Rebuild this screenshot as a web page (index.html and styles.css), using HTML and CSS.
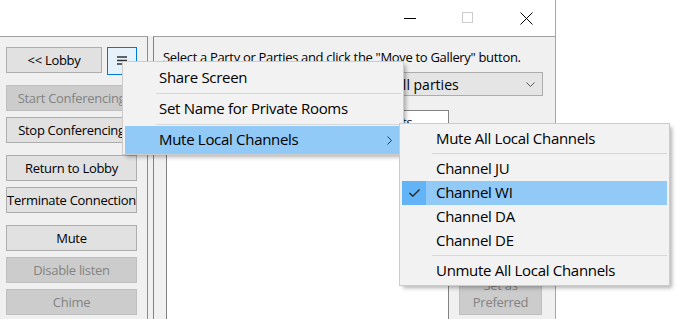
FILE: index.html
```html
<!DOCTYPE html>
<html lang="en">

<head>
    <meta charset="UTF-8" />
    <title>Conference</title>
    <link rel="stylesheet" href="styles.css">
</head>

<body>
    <div class="window">
        <div class="titlebar">
            <div class="caption-btn">
                <svg width="12" height="12" viewBox="0 0 12 12"><path d="M0 6.5H12" stroke="#000" stroke-width="1"/></svg>
            </div>
            <div class="caption-btn">
                <svg width="12" height="12" viewBox="0 0 12 12"><rect x="0.5" y="0.5" width="10" height="10" fill="none" stroke="#cccccc"/></svg>
            </div>
            <div class="caption-btn">
                <svg width="13" height="13" viewBox="0 0 13 13"><path d="M0.5 0.5L12.5 12.5M12.5 0.5L0.5 12.5" stroke="#000" stroke-width="1"/></svg>
            </div>
        </div>

        <div class="client">
            <!-- left side buttons -->
            <div class="side">
                <div class="top-row">
                    <button class="btn lobby">&lt;&lt; Lobby</button>
                    <button class="btn menu-btn">
                        <svg width="12" height="10" viewBox="0 0 12 10"><path d="M0 1H10M0 4.5H10M0 8H7" stroke="#333" stroke-width="1.6"/></svg>
                    </button>
                </div>
                <button class="btn first" disabled>Start Conferencing</button>
                <button class="btn">Stop Conferencing</button>
                <button class="btn group">Return to Lobby</button>
                <button class="btn">Terminate Connection</button>
                <button class="btn group">Mute</button>
                <button class="btn" disabled>Disable listen</button>
                <button class="btn" disabled>Chime</button>
            </div>

            <div class="main">
                <p class="hint">Select a Party or Parties and click the "Move to Gallery" button.</p>
                <div class="combo-row">
                    <span class="combo-label">Show:</span>
                    <div class="combo">
                        <span>All parties</span>
                        <svg width="9" height="5" viewBox="0 0 9 5"><path d="M0.5 0.5L4.5 4.5L8.5 0.5" fill="none" stroke="#555" stroke-width="1"/></svg>
                    </div>
                </div>
                <div class="lower">
                    <div class="list">
                        <div class="list-head">Participants</div>
                    </div>
                    <div class="actions">
                        <button class="btn tall" disabled>Set as<br>Preferred</button>
                    </div>
                </div>
            </div>
        </div>
    </div>

    <!-- context menu -->
    <div class="popup main-menu">
        <div class="item">Share Screen</div>
        <div class="sep"></div>
        <div class="item">Set Name for Private Rooms</div>
        <div class="sep"></div>
        <div class="item active">
            Mute Local Channels
            <svg class="arrow" width="5" height="9" viewBox="0 0 5 9"><path d="M0.5 0.5L4.5 4.5L0.5 8.5" fill="none" stroke="#333" stroke-width="1"/></svg>
        </div>
    </div>

    <div class="popup sub-menu">
        <div class="item">Mute All Local Channels</div>
        <div class="sep"></div>
        <div class="item">Channel JU</div>
        <div class="item active checked">
            <span class="check">
                <svg width="11" height="8" viewBox="0 0 11 8"><path d="M0.5 4L3.8 7.2L10.5 0.5" fill="none" stroke="#1a1a1a" stroke-width="1.2"/></svg>
            </span>
            Channel WI
        </div>
        <div class="item">Channel DA</div>
        <div class="item">Channel DE</div>
        <div class="sep"></div>
        <div class="item">Unmute All Local Channels</div>
    </div>
</body>

</html>
```

FILE: styles.css
```css
* {
    margin: 0;
    padding: 0;
    box-sizing: border-box;
}

body {
    width: 676px;
    height: 319px;
    overflow: hidden;
    position: relative;
    background: #fff;
    font-family: 'Open Sans', 'Noto Sans', sans-serif;
    color: #000;
}

.window {
    width: 556px;
    height: 319px;
    border-right: 1px solid #a6a6a6;
    display: flex;
    flex-direction: column;
}

.titlebar {
    height: 36px;
    display: flex;
    justify-content: flex-end;
    background: #fff;
}

.caption-btn {
    width: 58px;
    display: flex;
    align-items: center;
    justify-content: center;
}

.client {
    flex: 1;
    display: flex;
    background: #f0f0f0;
}

.side {
    width: 148px;
    border-top: 1px solid #a0a0a0;
    border-right: 1px solid #8c8c8c;
    padding: 10px 0 0 6px;
}

.top-row {
    display: flex;
    gap: 5px;
    height: 28px;
}

.btn {
    display: block;
    width: 131px;
    height: 26px;
    margin-top: 6px;
    border: 1px solid #adadad;
    background: #e1e1e1;
    font-family: 'Open Sans', 'Noto Sans', sans-serif;
    font-size: 13px;
    letter-spacing: -0.3px;
    white-space: nowrap;
    color: #000;
}

.btn:disabled {
    background: #cccccc;
    border-color: #bfbfbf;
    color: #838383;
}

.top-row .btn {
    margin-top: 0;
}

.lobby {
    width: 96px;
}

.menu-btn {
    width: 30px;
    height: 28px;
    border-color: #0078d7;
    background: #e5f1fb;
    display: flex;
    align-items: center;
    padding-left: 9px;
}

.btn.first {
    margin-top: 10px;
}

.btn.group {
    margin-top: 12px;
}

.main {
    flex: 1;
    margin-left: 5px;
    border-top: 1px solid #a0a0a0;
    border-left: 1px solid #828282;
    padding: 12px 12px 0 9px;
    display: flex;
    flex-direction: column;
}

.hint {
    font-size: 13px;
    line-height: 16px;
    letter-spacing: -0.32px;
}

.combo-row {
    margin-top: 7px;
    display: flex;
    align-items: center;
    gap: 8px;
}

.combo-label {
    font-size: 13px;
    margin-left: auto;
}

.combo {
    width: 156px;
    height: 24px;
    border: 1px solid #adadad;
    background: #e5e5e5;
    display: flex;
    align-items: center;
    justify-content: space-between;
    padding: 0 7px 0 6px;
    font-size: 14px;
}

.lower {
    flex: 1;
    display: flex;
    margin-top: 14px;
}

.list {
    width: 283px;
    margin-left: 3px;
    background: #fff;
    border: 1px solid #828282;
    border-bottom: none;
}

.list-head {
    height: 22px;
    padding-left: 174px;
    font-size: 13px;
    line-height: 22px;
    border-bottom: 1px solid #e5e5e5;
}

.actions {
    padding: 162px 0 0 10px;
}

.btn.tall {
    width: 83px;
    height: 43px;
    margin-top: 0;
    line-height: 17px;
}

/* popup menus */
.popup {
    position: absolute;
    background: #f2f2f2;
    border: 1px solid #cccccc;
    padding: 2px;
    box-shadow: 3px 3px 4px -1px rgba(0, 0, 0, 0.3);
    font-size: 15px;
    letter-spacing: -0.3px;
}

.main-menu {
    left: 122px;
    top: 61px;
    width: 282px;
    padding-bottom: 0;
}

.main-menu .item {
    height: 28px;
    line-height: 27px;
    padding-left: 34px;
    position: relative;
}

.item.active {
    background: #91c9f7;
}

.arrow {
    position: absolute;
    right: 9px;
    top: 10px;
}

.sep {
    height: 3px;
    margin-left: 31px;
    position: relative;
}

.sep::after {
    content: '';
    position: absolute;
    left: 0;
    right: 0;
    top: 1px;
    border-top: 1px solid #d7d7d7;
}

.sub-menu {
    left: 399px;
    top: 123px;
    width: 271px;
    padding-top: 3px;
    z-index: 2;
}

.sub-menu .item {
    height: 24px;
    line-height: 23px;
    padding-left: 34px;
    position: relative;
}

.sub-menu .sep {
    height: 6px;
    margin-left: 30px;
}

.sub-menu .sep::after {
    top: 2px;
}

.check {
    position: absolute;
    left: 0;
    top: 0;
    width: 24px;
    height: 24px;
    background: #62b4f6;
    display: flex;
    align-items: center;
    justify-content: center;
}
```
